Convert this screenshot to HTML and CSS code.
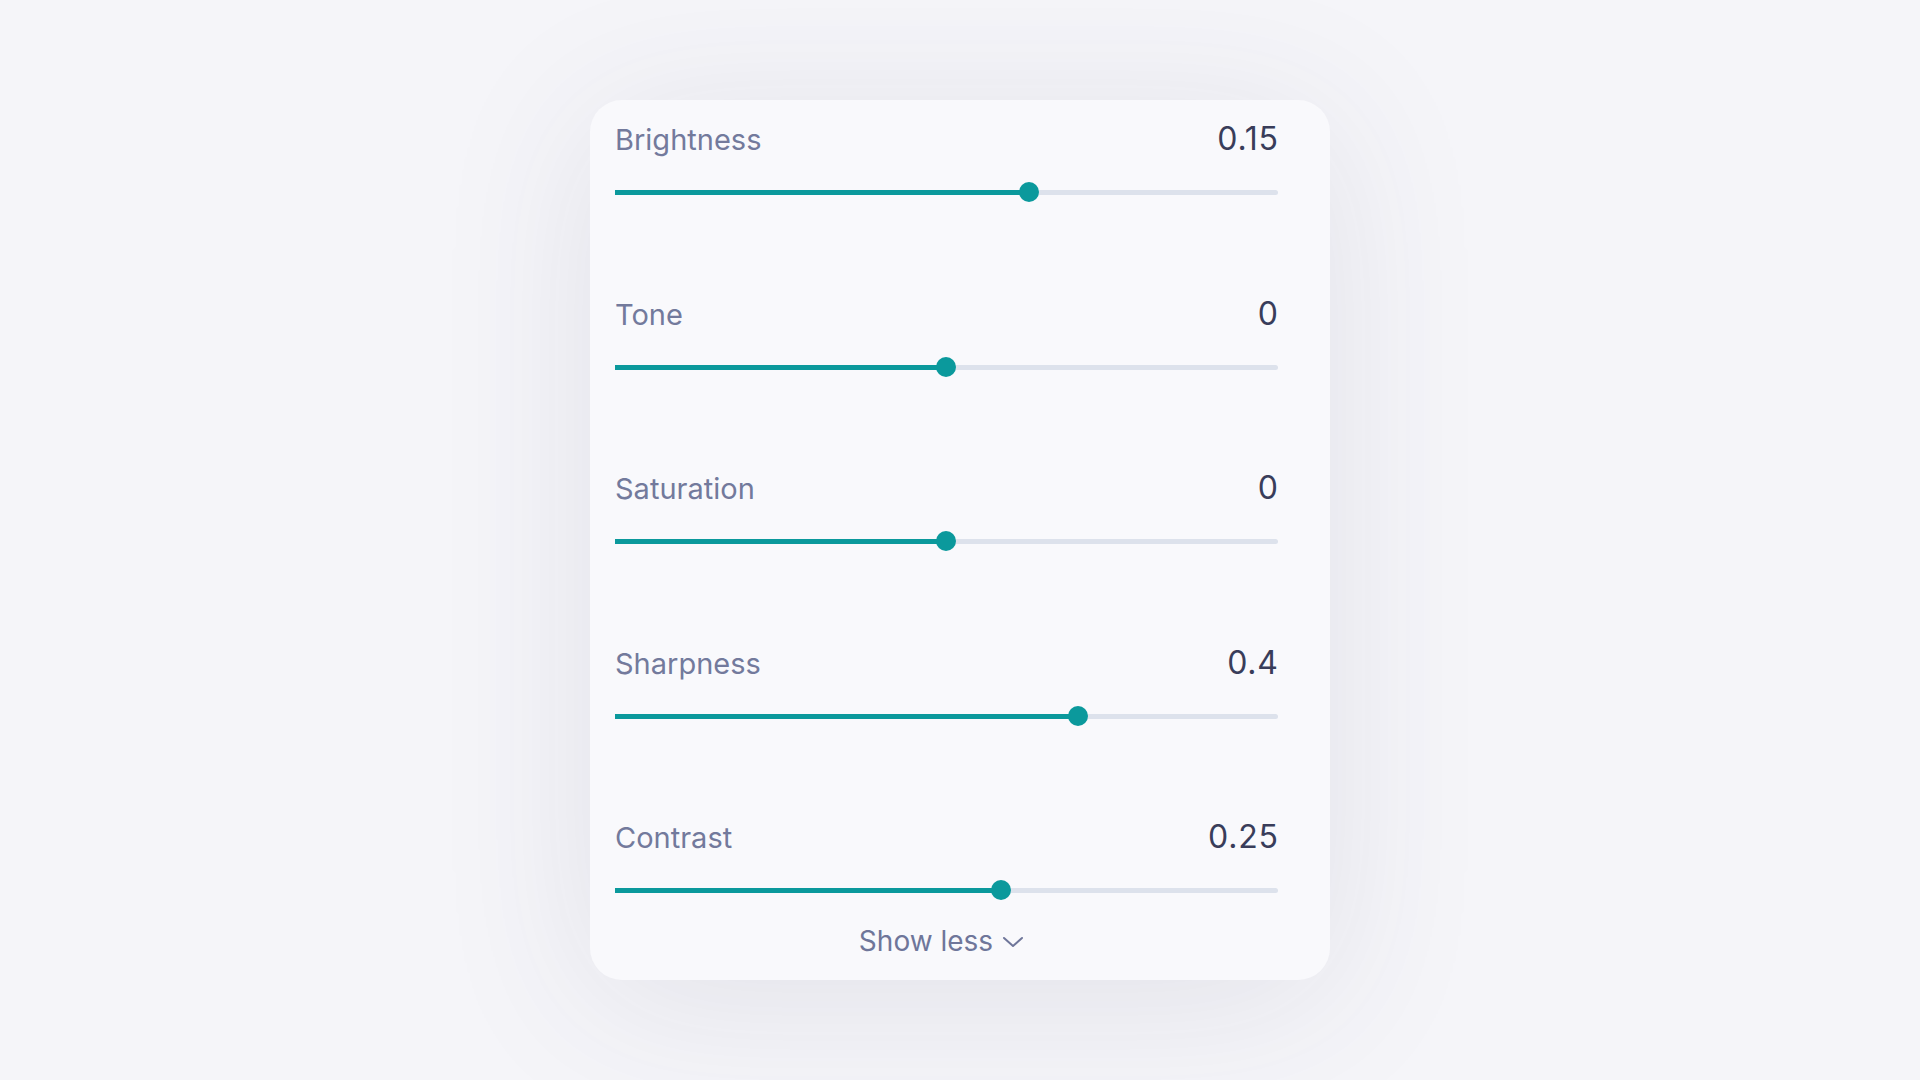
FILE: index.html
```html
<!DOCTYPE html>
<html lang="en">
<head>
    <meta charset="UTF-8">
    <meta name="viewport" content="width=device-width, initial-scale=1.0">
    <title>Adjustments</title>
    <link rel="stylesheet" href="styles.css">
</head>
<body>

<div class="panel">
    <div class="row">
        <div class="row-head">
            <span class="label">Brightness</span>
            <span class="value">0.15</span>
        </div>
        <div class="slider" style="--pos: 62.4%">
            <div class="fill"></div>
            <div class="thumb"></div>
        </div>
    </div>

    <div class="row">
        <div class="row-head">
            <span class="label">Tone</span>
            <span class="value">0</span>
        </div>
        <div class="slider" style="--pos: 49.9%">
            <div class="fill"></div>
            <div class="thumb"></div>
        </div>
    </div>

    <div class="row">
        <div class="row-head">
            <span class="label">Saturation</span>
            <span class="value">0</span>
        </div>
        <div class="slider" style="--pos: 49.9%">
            <div class="fill"></div>
            <div class="thumb"></div>
        </div>
    </div>

    <div class="row">
        <div class="row-head">
            <span class="label">Sharpness</span>
            <span class="value">0.4</span>
        </div>
        <div class="slider" style="--pos: 69.8%">
            <div class="fill"></div>
            <div class="thumb"></div>
        </div>
    </div>

    <div class="row">
        <div class="row-head">
            <span class="label">Contrast</span>
            <span class="value">0.25</span>
        </div>
        <div class="slider" style="--pos: 58.2%">
            <div class="fill"></div>
            <div class="thumb"></div>
        </div>
    </div>

    <button class="toggle">
        Show less
        <svg width="22" height="12" viewBox="0 0 22 12" fill="none">
            <path d="M2 2 L11 10 L20 2" stroke="currentColor" stroke-width="2" stroke-linecap="round" stroke-linejoin="round"/>
        </svg>
    </button>
</div>

</body>
</html>
```

FILE: styles.css
```css
body {
    margin: 0;
    height: 1080px;
    background-color: #f5f5f9;
    font-family: Inter, "Noto Sans", sans-serif;
    display: flex;
    justify-content: center;
    align-items: flex-start;
}

.panel {
    width: 740px;
    box-sizing: border-box;
    margin-top: 100px;
    padding: 21px 52px 23px 25px;
    background-color: #f9f9fc;
    border-radius: 32px;
    box-shadow: 0 20px 160px rgba(60, 60, 90, 0.10);
    display: flex;
    flex-direction: column;
    gap: 93.5px;
}

.row-head {
    display: flex;
    justify-content: space-between;
    align-items: baseline;
    height: 36px;
    line-height: 36px;
}
.label {
    font-size: 29px;
    color: #737a9c;
}
.value {
    font-size: 32px;
    letter-spacing: 0.8px;
    margin-right: -0.8px;
    color: #393d5a;
}

.slider {
    position: relative;
    height: 20px;
    margin-top: 25px;
}
.slider::before {
    content: "";
    position: absolute;
    left: 0;
    right: 0;
    top: 8px;
    height: 5px;
    border-radius: 3px;
    background-color: #dde2ec;
}
.fill {
    position: absolute;
    left: 0;
    top: 8px;
    height: 5px;
    width: var(--pos);
    background-color: #0b999c;
}
.thumb {
    position: absolute;
    top: 0;
    left: var(--pos);
    width: 20px;
    height: 20px;
    margin-left: -10px;
    border-radius: 50%;
    background-color: #0b999c;
}

.toggle {
    margin-top: -68.5px; /* 25px below the last slider */
    align-self: center;
    display: flex;
    align-items: center;
    gap: 9px;
    padding: 0 10px 0 0;
    border: none;
    background: none;
    font-family: inherit;
    font-size: 28px;
    line-height: 32px;
    color: #6f769a;
    cursor: pointer;
}
.toggle svg {
    margin-top: 2px;
}
```
